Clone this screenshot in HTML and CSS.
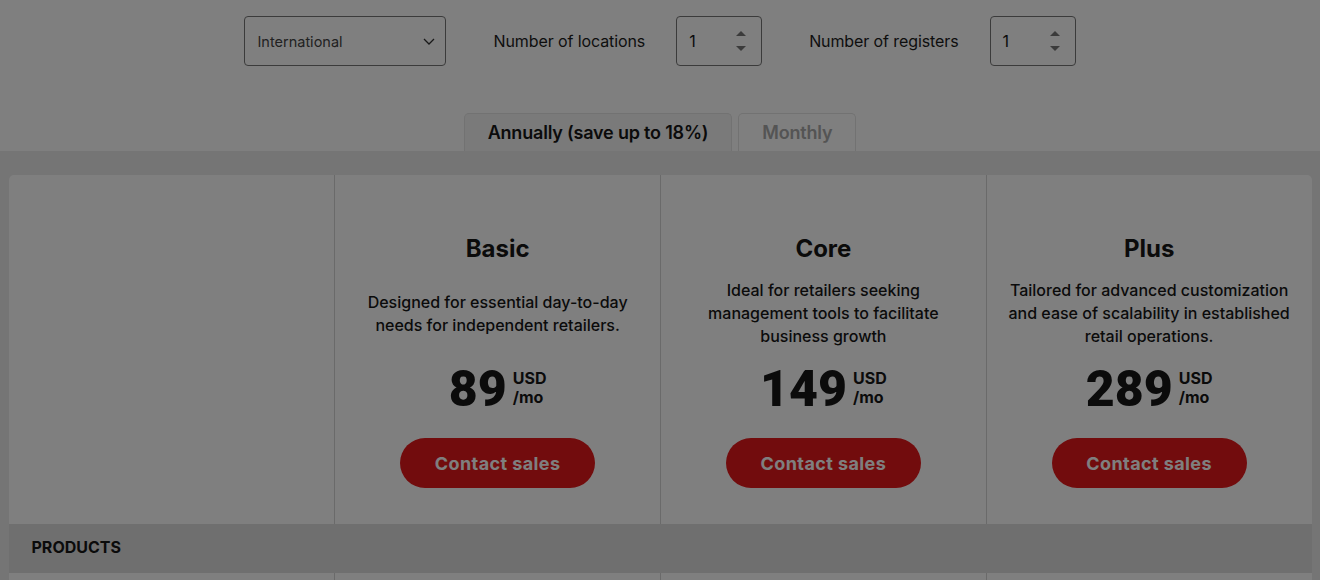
FILE: index.html
```html
<!DOCTYPE html>
<html lang="en">
<head>
<meta charset="utf-8">
<title>Pricing</title>
<link rel="stylesheet" href="styles.css">
</head>
<body>
<div class="controls">
  <div class="select">
    <span>International</span>
    <svg class="chev" width="12" height="7" viewBox="0 0 12 7"><polyline points="1,1 6,6 11,1" fill="none" stroke="#333" stroke-width="1.3"/></svg>
  </div>
  <label class="lbl">Number of locations</label>
  <div class="num">
    <span>1</span>
    <span class="spin"><i class="up"></i><i class="down"></i></span>
  </div>
  <label class="lbl">Number of registers</label>
  <div class="num">
    <span>1</span>
    <span class="spin"><i class="up"></i><i class="down"></i></span>
  </div>
</div>

<div class="tabs">
  <div class="tab active">Annually (save up to 18%)</div>
  <div class="tab">Monthly</div>
</div>

<div class="band">
  <div class="card">
    <div class="head">
      <div class="cell"></div>
      <div class="cell plan">
        <h2>Basic</h2>
        <div class="desc">Designed for essential day-to-day needs for independent retailers.</div>
        <div class="price"><span class="amt">89</span><span class="unit">USD<br>/mo</span></div>
        <a class="btn">Contact sales</a>
      </div>
      <div class="cell plan">
        <h2>Core</h2>
        <div class="desc">Ideal for retailers seeking management tools to facilitate business growth</div>
        <div class="price"><span class="amt">149</span><span class="unit">USD<br>/mo</span></div>
        <a class="btn">Contact sales</a>
      </div>
      <div class="cell plan">
        <h2>Plus</h2>
        <div class="desc">Tailored for advanced customization and ease of scalability in established retail operations.</div>
        <div class="price"><span class="amt">289</span><span class="unit">USD<br>/mo</span></div>
        <a class="btn">Contact sales</a>
      </div>
    </div>
    <div class="section">PRODUCTS</div>
    <div class="row">
      <div class="rcell"></div><div class="rcell"></div><div class="rcell"></div><div class="rcell"></div>
    </div>
  </div>
</div>

<div class="overlay"></div>
</body>
</html>
```

FILE: styles.css
```css
* { box-sizing: border-box; }
html, body { margin: 0; padding: 0; }
body {
  font-family: Inter, "Noto Sans", sans-serif;
  color: #161616;
  background: #fff;
  height: 580px;
  overflow: hidden;
}
.controls {
  display: flex;
  justify-content: center;
  align-items: center;
  padding-top: 16px;
  height: 66px;
}
.select {
  width: 202px;
  height: 50px;
  border: 1px solid #777;
  border-radius: 4px;
  display: flex;
  align-items: center;
  justify-content: space-between;
  padding: 0 10px 0 12px;
  font-size: 14.5px;
  color: #444;
}
.lbl {
  font-size: 16px;
  margin: 0 31px 0 47px;
  color: #1c1c1c;
  letter-spacing: -0.1px;
}
.num {
  width: 86px;
  height: 50px;
  border: 1px solid #777;
  border-radius: 4px;
  display: flex;
  align-items: center;
  justify-content: space-between;
  padding: 0 15px 0 12px;
  font-size: 16px;
}
.spin {
  display: flex;
  flex-direction: column;
  gap: 10px;
}
.spin i {
  display: block;
  width: 0; height: 0;
  border-left: 5px solid transparent;
  border-right: 5px solid transparent;
}
.spin .up { border-bottom: 5px solid #767676; }
.spin .down { border-top: 5px solid #767676; }

.tabs {
  display: flex;
  justify-content: center;
  gap: 6px;
  margin-top: 47px;
  height: 38px;
}
.tab {
  height: 38px;
  padding: 0 23px;
  border: 1px solid #e4e4e4;
  border-bottom: none;
  border-radius: 5px 5px 0 0;
  font-size: 18px;
  font-weight: 600;
  letter-spacing: -0.2px;
  display: flex;
  align-items: center;
  color: #a8a8a8;
  background: #fff;
}
.tab.active {
  background: #f4f4f4;
  color: #161616;
}

.band {
  background: #eaeaea;
  padding-top: 24px;
  height: 429px;
}
.card {
  width: 1303px;
  margin: 0 auto;
  background: #fff;
  border-radius: 5px 5px 0 0;
  overflow: hidden;
}
.head {
  display: grid;
  grid-template-columns: repeat(4, 1fr);
  height: 349px;
}
.cell { border-left: 1px solid #d4d4d4; }
.cell:first-child { border-left: none; }
.plan {
  display: flex;
  flex-direction: column;
  align-items: center;
  padding: 58px 20px 0;
  text-align: center;
}
.plan h2 {
  margin: 0;
  font-size: 24px;
  line-height: 32px;
  font-weight: 700;
}
.desc {
  margin-top: 14px;
  height: 69px;
  display: flex;
  align-items: center;
  font-size: 16px;
  line-height: 23px;
  font-weight: 500;
}
.price {
  margin-top: 17px;
  display: flex;
  align-items: center;
  gap: 6px;
  height: 48px;
}
.amt {
  font-family: Roboto, Inter, sans-serif;
  font-size: 50px;
  font-weight: 900;
  line-height: 48px;
}
.unit {
  font-size: 16px;
  font-weight: 700;
  line-height: 19px;
  text-align: left;
  margin-top: -2px;
}
.btn {
  margin-top: 25px;
  width: 195px;
  height: 50px;
  border-radius: 25px;
  background: #e4181a;
  color: #fff;
  font-size: 18px;
  font-weight: 700;
  letter-spacing: 0.4px;
  display: flex;
  align-items: center;
  justify-content: center;
}
.section {
  background: #dedede;
  height: 49px;
  display: flex;
  align-items: center;
  padding: 0 0 3px 23px;
  font-size: 16px;
  font-weight: 700;
}
.row {
  display: grid;
  grid-template-columns: repeat(4, 1fr);
  height: 60px;
}
.rcell { border-left: 1px solid #d4d4d4; }
.rcell:first-child { border-left: none; }

.overlay {
  position: fixed;
  inset: 0;
  background: rgba(0, 0, 0, 0.5);
}
```
